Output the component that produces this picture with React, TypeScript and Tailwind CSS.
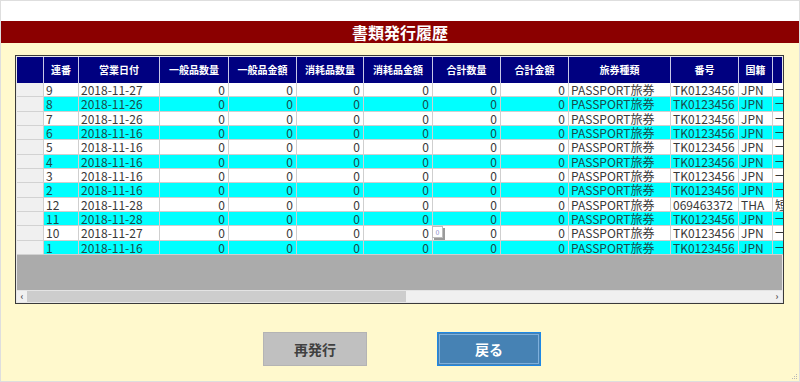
import React from "react";

const cols = [
  { w: 35, label: "連番", align: "left" },
  { w: 81, label: "営業日付", align: "left" },
  { w: 69, label: "一般品数量", align: "right" },
  { w: 68, label: "一般品金額", align: "right" },
  { w: 67, label: "消耗品数量", align: "right" },
  { w: 69, label: "消耗品金額", align: "right" },
  { w: 68, label: "合計数量", align: "right" },
  { w: 68, label: "合計金額", align: "right" },
  { w: 102, label: "旅券種類", align: "left" },
  { w: 68, label: "番号", align: "left" },
  { w: 34, label: "国籍", align: "left" },
  { w: 11, label: "", align: "left" },
];

const rows: [string, string, string, string, string][] = [
  ["9", "2018-11-27", "TK0123456", "JPN", "一"],
  ["8", "2018-11-26", "TK0123456", "JPN", "一"],
  ["7", "2018-11-26", "TK0123456", "JPN", "一"],
  ["6", "2018-11-16", "TK0123456", "JPN", "一"],
  ["5", "2018-11-16", "TK0123456", "JPN", "一"],
  ["4", "2018-11-16", "TK0123456", "JPN", "一"],
  ["3", "2018-11-16", "TK0123456", "JPN", "一"],
  ["2", "2018-11-16", "TK0123456", "JPN", "一"],
  ["12", "2018-11-28", "069463372", "THA", "短"],
  ["11", "2018-11-28", "TK0123456", "JPN", "一"],
  ["10", "2018-11-27", "TK0123456", "JPN", "一"],
  ["1", "2018-11-16", "TK0123456", "JPN", "一"],
];

export default function App() {
  const font = { fontFamily: '"Noto Sans CJK JP", "Noto Sans", sans-serif' };
  return (
    <div
      className="w-[800px] h-[382px] flex flex-col border border-[#dedede] bg-[#FFF9CD] relative overflow-hidden"
      style={font}
    >
      <div className="h-[20px] bg-white shrink-0" />
      <div className="h-[22px] shrink-0 bg-[#8B0000] flex items-center justify-center text-white font-bold text-[16px] leading-none">
        書類発行履歴
      </div>
      <div className="ml-[14px] mt-[12px] w-[769px] border border-[#3a3a3a] p-[1px] bg-[#e8e8e8] flex flex-col">
        {/* header */}
        <div className="flex h-[26px] bg-[#000080]">
          <div className="w-[26px] shrink-0" />
          {cols.map((c, i) => (
            <div
              key={i}
              style={{ width: c.w }}
              className="shrink-0 border-l border-[#c8c8e8] flex items-center justify-center text-white font-bold text-[10px] leading-none overflow-hidden whitespace-nowrap"
            >
              {c.label}
            </div>
          ))}
        </div>
        {/* rows */}
        {rows.map((r, ri) => {
          const cyan = ri % 2 === 1;
          const h = ri % 3 === 1 ? "h-[15px]" : "h-[14px]";
          const cells = [r[0], r[1], "0", "0", "0", "0", "0", "0", "PASSPORT旅券", r[2], r[3], r[4]];
          return (
            <div key={ri} className={`flex ${h}`}>
              <div className="w-[26px] shrink-0 bg-[#F0F0F0] border-b border-[#d2d2d2]" />
              {cells.map((t, ci) => (
                <div
                  key={ci}
                  style={{ width: cols[ci].w }}
                  className={`shrink-0 border-l border-b border-[#cfcfcf] flex items-center overflow-hidden whitespace-nowrap text-[12px] leading-none ${
                    cols[ci].align === "right" ? "justify-end pr-[3px]" : "justify-start pl-[2px]"
                  } ${cyan ? "bg-[#00FFFF] text-[#1a4a4a]" : "bg-white text-[#383838]"}`}
                >
                  {t}
                </div>
              ))}
            </div>
          );
        })}
        {/* empty gray area */}
        <div className="h-[36px] bg-[#ABABAB] border-b border-[#e4e4e4]" />
        {/* scrollbar */}
        <div className="h-[11px] bg-[#F0F0F0] flex items-center">
          <div className="w-[10px] h-full flex items-center justify-center text-[9px] font-bold text-[#555] leading-none">
            ‹
          </div>
          <div className="w-[379px] h-full bg-[#CDCDCD]" />
          <div className="flex-1" />
          <div className="w-[10px] h-full flex items-center justify-center text-[9px] font-bold text-[#555] leading-none">
            ›
          </div>
        </div>
      </div>
      {/* buttons */}
      <div className="flex pl-[262px] gap-[70px] mt-[28px]">
        <button className="w-[104px] h-[34px] bg-[#C0C0C0] border border-[#b4b4b4] text-[#404040] font-bold text-[14px] leading-none flex items-center justify-center">
          再発行
        </button>
        <button className="w-[104px] h-[34px] bg-[#4682B4] border border-[#1e88e5] outline outline-1 outline-[#7fb0dc] -outline-offset-[3px] text-white font-bold text-[14px] leading-none flex items-center justify-center">
          戻る
        </button>
      </div>
      {/* tooltip */}
      <div className="absolute left-[431px] top-[225px] w-[11px] h-[12px] bg-white border border-[#bdbdbd] shadow-[2px_2px_0_#9a9a9a] flex items-center justify-center text-[7px] text-[#8888cc] leading-none">
        0
      </div>
      {/* resize grip */}
      <svg className="absolute right-[1px] bottom-[1px]" width="8" height="8" viewBox="0 0 8 8">
        <rect x="6" y="2" width="1" height="1" fill="#b8b8b8" />
        <rect x="4" y="4" width="1" height="1" fill="#b8b8b8" />
        <rect x="6" y="4" width="1" height="1" fill="#b8b8b8" />
        <rect x="2" y="6" width="1" height="1" fill="#b8b8b8" />
        <rect x="4" y="6" width="1" height="1" fill="#b8b8b8" />
        <rect x="6" y="6" width="1" height="1" fill="#b8b8b8" />
      </svg>
    </div>
  );
}
